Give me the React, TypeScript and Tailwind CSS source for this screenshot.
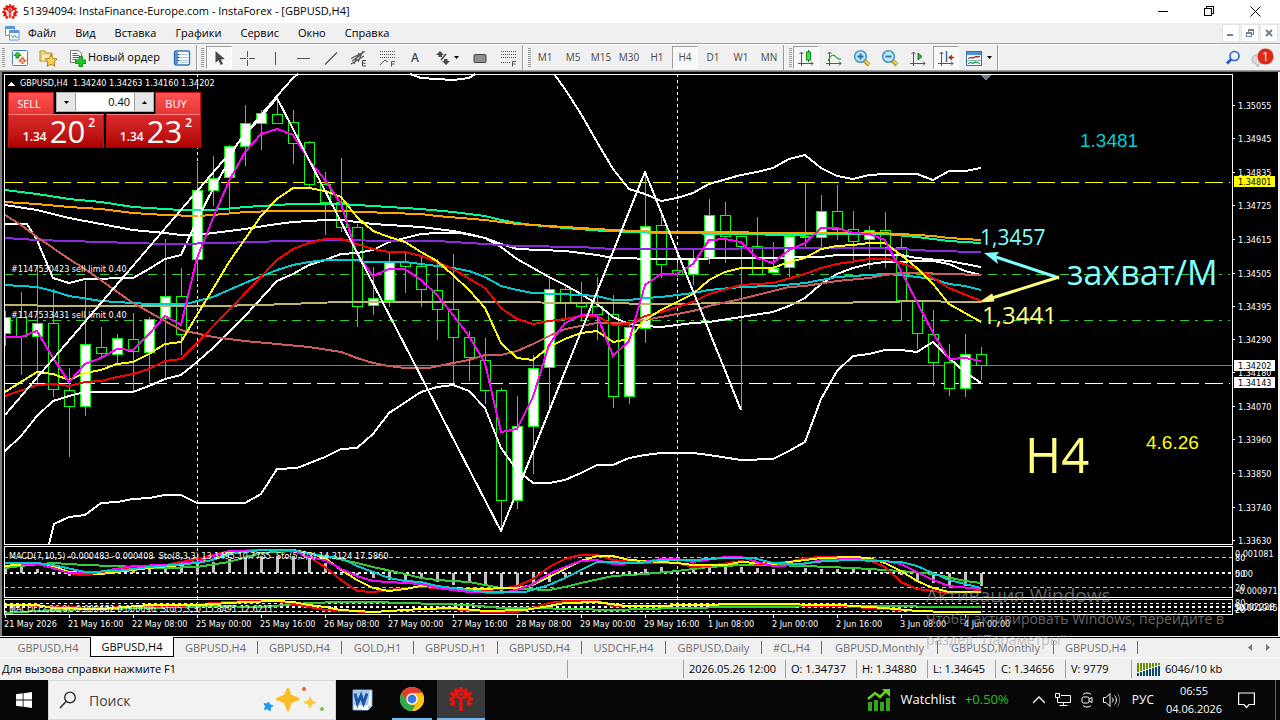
import type { ReactNode } from 'react';

/* ---------- chart data ---------- */

// high, low, body top, body bottom, 1 = filled body
const candles: number[][] = [
  [311, 345, 317, 333, 1], [292, 374, 317, 336, 0], [265, 382, 323, 336, 1], [289, 396, 323, 389, 0],
  [368, 456, 390, 406, 0], [281, 415, 344, 406, 1], [327, 357, 347, 353, 0], [334, 362, 338, 354, 1],
  [313, 390, 339, 351, 0], [317, 381, 319, 352, 1], [239, 377, 296, 318, 1], [268, 354, 296, 334, 0],
  [162, 279, 190, 259, 1], [156, 205, 178, 190, 1], [145, 213, 146, 177, 1], [105, 165, 123, 146, 1],
  [110, 149, 113, 123, 1], [99, 123, 114, 123, 0], [110, 163, 122, 143, 0], [141, 186, 142, 184, 0],
  [172, 234, 184, 202, 0], [158, 231, 202, 227, 0], [224, 326, 227, 306, 0], [267, 314, 298, 305, 1],
  [252, 306, 262, 300, 1], [253, 292, 262, 266, 0], [257, 306, 266, 289, 0], [259, 339, 290, 309, 0],
  [254, 382, 309, 337, 0], [331, 380, 337, 357, 0], [338, 403, 360, 390, 0], [388, 530, 390, 500, 0],
  [396, 508, 426, 500, 1], [355, 473, 368, 426, 1], [277, 410, 289, 367, 1], [286, 318, 289, 302, 0],
  [282, 320, 302, 306, 0], [277, 339, 306, 314, 0], [295, 407, 314, 396, 0], [323, 403, 327, 396, 1],
  [172, 342, 226, 328, 1], [212, 277, 225, 264, 0], [263, 276, 270, 274, 0], [250, 284, 258, 274, 1],
  [199, 263, 215, 257, 1], [202, 262, 215, 236, 0], [236, 409, 236, 246, 0], [217, 274, 246, 274, 0],
  [242, 272, 268, 272, 1], [236, 277, 236, 267, 1], [182, 247, 236, 237, 0], [195, 247, 211, 237, 1],
  [185, 239, 211, 229, 0], [211, 262, 229, 241, 0], [226, 268, 230, 239, 1], [212, 267, 230, 247, 0],
  [238, 320, 247, 300, 0], [301, 348, 301, 333, 0], [310, 385, 334, 362, 0], [344, 395, 362, 388, 0],
  [334, 396, 354, 388, 1], [347, 379, 354, 365, 0],
];

const overlays: { color: string; points: string }[] = [
  { color: '#00fa9a', points: '5,190 37,194 69,199 101,202 133,207 165,209 181,210 213,210 245,207 293,204 341,204 389,207 421,209 453,212 485,216 501,220 517,223 533,225 565,228 605,231 661,233 741,234 789,235 821,234 885,234 917,237 949,241 981,243' },
  { color: '#ffa500', points: '5,202 37,204 69,207 101,209 133,213 165,215 197,216 213,215 245,212 277,211 341,211 389,213 421,214 437,216 485,220 501,222 517,224 565,227 613,230 661,232 741,232 757,233 877,233 901,234 933,236 949,238 981,240' },
  { color: '#ffffff', points: '5,205 37,210 69,218 101,224 133,230 165,233 181,235 197,235 213,233 229,231 245,229 277,224 293,222 325,220 341,220 357,222 373,224 421,227 453,231 469,234 485,238 501,244 517,249 565,251 597,255 613,258 661,259 757,258 821,257 837,255 901,255 917,258 949,261 981,267' },
  { color: '#ffffff', points: '5,451 21,436 37,416 53,401 69,396 85,392 133,392 149,386 165,379 181,375 197,362 213,348 245,316 277,281 293,274 309,265 325,260 341,254 357,253 373,250 389,242 421,234 437,233 461,233 485,238 501,247 517,259 533,268 549,277 565,285 581,294 597,304 613,317 629,324 645,326 661,327 693,323 709,322 741,317 773,312 789,306 805,298 821,284 837,274 853,268 869,264 885,262 933,261 949,264 965,271 981,275' },
  { color: '#ffffff', points: '5,224 27,224 37,240 53,278 69,283 85,279 133,278 149,269 165,259 181,255 197,220 213,189 229,161 237,144 261,115 277,96 293,78 298,74' },
  { color: '#ffffff', points: '410,74 421,78 437,79 453,80 469,78 475,74' },
  { color: '#ffffff', points: '554,74 565,89 581,114 597,142 613,169 629,189 645,194 661,201 677,198 693,193 709,184 741,175 757,172 773,168 789,159 805,155 821,168 837,176 853,179 869,175 885,174 917,174 933,180 949,171 965,171 981,168' },
  { color: '#ffffff', points: '49,544 54,524 69,517 85,515 101,503 117,502 133,499 149,498 165,495 181,495 197,503 213,503 245,503 261,494 277,469 297,468 325,457 341,449 357,448 373,434 389,413 421,392 437,387 453,385 469,391 485,408 501,448 517,470 533,483 549,483 565,480 581,473 597,465 613,465 629,458 645,455 661,453 693,453 709,455 741,460 773,459 789,451 805,442 821,399 837,371 853,356 869,354 885,350 901,350 917,352 933,342 949,358 965,372 981,383' },
  { color: '#8a2be2', points: '5,238 37,240 69,241 101,242 133,243 165,244 229,243 245,242 293,241 341,240 389,241 437,241 453,242 485,244 517,246 581,247 613,249 869,248 901,249 933,251 981,252' },
  { color: '#00ced1', points: '5,285 37,287 53,291 69,296 101,301 149,304 186,304 213,297 245,283 277,270 293,265 309,262 325,260 357,260 365,262 405,262 421,264 437,266 453,268 469,271 485,277 501,286 517,290 533,293 581,295 597,296 613,300 629,300 645,298 661,297 693,293 709,290 741,287 773,286 805,283 837,277 885,274 901,275 933,279 949,284 965,286 981,290' },
  { color: '#bdb76b', points: '5,305 69,306 213,306 261,305 341,302 485,302 597,303 661,304 741,303 837,303 869,302 933,301 949,302 981,302' },
  { color: '#cd5c5c', points: '5,215 21,225 37,237 53,248 69,259 85,269 133,303 149,312 165,321 181,330 213,337 245,341 277,344 309,347 341,352 357,358 373,363 389,366 405,368 429,368 453,363 469,360 485,355 501,355 517,351 533,344 549,336 565,329 597,323 629,323 645,320 661,317 693,311 709,306 741,299 789,287 805,286 837,281 869,278 885,275 901,273 917,273 949,274 981,275' },
  { color: '#ff0000', points: '5,396 37,385 53,384 69,386 85,382 101,381 117,377 133,374 149,369 165,361 181,359 197,343 229,310 277,260 293,249 309,243 325,239 341,239 357,244 373,249 389,252 405,252 421,256 437,262 453,269 485,288 501,308 517,319 533,324 549,321 565,319 581,316 597,316 613,325 629,324 645,316 661,312 693,302 709,294 741,285 773,283 805,274 821,268 837,264 869,259 888,259 901,263 917,269 933,278 949,288 981,301' },
  { color: '#ffff00', points: '5,392 21,382 37,372 53,374 69,380 85,373 101,370 117,364 133,362 149,354 165,344 181,342 197,315 213,289 229,262 245,239 261,216 277,199 293,188 309,188 325,191 341,197 357,217 373,231 389,237 405,242 421,252 437,261 453,275 469,290 485,308 501,343 517,358 533,360 549,347 565,339 581,333 597,331 613,342 629,339 645,320 661,310 677,302 693,294 709,280 725,272 741,268 773,268 789,262 805,258 821,249 837,246 853,245 869,243 885,243 901,255 917,268 933,284 949,304 981,322' },
  { color: '#ff00ff', points: '5,337 21,337 37,331 53,358 69,382 85,364 101,358 117,349 133,350 149,334 165,316 181,325 197,258 213,218 229,181 245,152 261,134 277,129 293,135 309,160 325,180 341,204 357,254 373,276 389,269 405,269 421,280 437,295 453,315 469,336 485,363 501,432 517,429 533,397 549,345 565,323 581,315 597,315 613,356 629,341 645,285 661,274 677,274 693,264 709,240 725,239 741,242 757,258 773,263 789,250 805,243 821,228 837,228 853,233 869,234 885,240 901,271 933,333 949,359 965,358 981,361' },
];

const macdBars: [number, number][] = [
  [5, 566], [21, 566], [37, 569], [53, 575], [69, 576], [85, 575], [101, 575], [117, 571], [133, 570], [149, 568],
  [165, 567], [181, 565], [197, 563], [213, 562], [229, 559], [245, 557], [261, 556], [277, 556], [293, 556],
  [309, 558], [325, 563], [341, 575], [357, 576], [373, 578], [389, 580], [405, 582], [421, 579], [437, 582],
  [453, 585], [469, 583], [485, 586], [501, 594], [517, 587], [533, 585], [549, 582], [565, 577], [581, 575],
  [597, 574], [613, 571], [629, 571], [645, 569], [661, 567], [677, 570], [693, 564], [709, 568], [725, 567],
  [741, 567], [757, 568], [773, 569], [789, 571], [805, 568], [821, 569], [837, 569], [853, 568], [869, 569],
  [885, 572], [901, 575], [917, 581], [933, 583], [949, 586], [965, 586], [981, 586],
];

const oscillators: { color: string; points: string }[] = [
  { color: '#32cd32', points: '5,568 29,565 53,563 85,565 113,566 165,568 197,567 229,562 261,553 293,551 325,556 357,563 373,567 405,574 421,578 437,580 469,582 485,585 501,588 549,590 565,587 581,583 613,576 645,574 677,571 709,567 741,565 773,565 805,566 853,568 901,571 933,574 965,581 981,583' },
  { color: '#ff0000', points: '5,563 37,564 53,566 69,573 80,575 101,574 117,569 165,565 197,559 229,551 261,550 293,551 309,557 325,567 341,580 357,591 373,592 389,590 405,588 421,587 437,588 453,590 485,590 501,589 517,586 533,579 549,567 565,559 580,555 597,555 613,560 645,563 677,563 693,567 709,566 741,561 757,564 773,563 789,562 805,558 821,557 853,557 869,560 885,567 901,582 917,589 949,593 981,591' },
  { color: '#ffff00', points: '5,566 37,563 53,566 69,572 101,574 117,572 149,568 181,565 213,560 229,553 261,550 293,550 309,553 325,558 341,570 357,580 373,588 389,591 405,589 421,586 437,587 469,589 517,588 533,585 549,577 565,569 581,561 597,556 613,556 629,560 661,562 677,563 693,565 725,565 741,562 773,564 789,562 821,558 853,557 869,558 885,563 901,571 917,581 933,588 949,592 981,592' },
  { color: '#ff00ff', points: '5,563 37,564 53,568 69,573 95,573 109,570 133,566 165,565 197,562 213,556 229,551 277,550 293,551 309,557 325,560 341,569 357,576 373,581 405,583 421,584 437,588 469,592 501,593 517,590 533,584 549,574 565,567 581,561 597,560 613,564 637,563 661,559 677,559 693,562 725,557 741,557 757,562 773,566 800,565 821,560 853,559 885,561 901,564 917,572 933,580 949,586 981,589' },
  { color: '#00ced1', points: '5,563 37,563 53,565 85,572 117,571 149,567 197,563 213,560 229,554 245,552 261,550 293,550 309,554 341,558 357,566 373,572 389,578 405,581 421,582 437,586 453,588 485,592 525,592 549,585 565,578 581,570 597,562 640,563 661,560 693,560 725,558 753,558 773,563 800,564 825,561 853,560 901,562 917,566 933,573 949,580 965,584 981,588' },
  { color: '#32cd32', points: '5,613 53,610 149,608 213,606 261,607 309,603 341,602 373,602 405,603 437,604 469,605 501,608 533,608 613,610 677,608 741,607 853,606 981,607' },
  { color: '#ff0000', points: '5,605 21,605 53,607 101,608 149,606 181,606 213,603 229,602 245,601 277,601 293,604 309,607 325,610 341,611 373,612 405,610 421,609 453,609 485,612 517,612 533,608 549,603 565,601 597,601 613,606 660,606 680,605 760,605 840,606 853,607 885,609 917,611 949,612 981,612' },
  { color: '#ffff00', points: '5,605 37,605 53,608 101,609 149,605 197,605 213,604 245,602 277,601 293,602 309,605 325,607 341,610 373,612 405,610 421,609 453,608 485,611 525,610 549,606 565,603 597,602 625,606 660,606 680,605 760,604 840,605 853,606 885,608 917,611 949,612 981,612' },
];

const timeLabels = [
  '21 May 2026', '21 May 16:00', '22 May 08:00', '25 May 00:00', '25 May 16:00', '26 May 08:00', '27 May 00:00', '27 May 16:00',
  '28 May 08:00', '29 May 00:00', '29 May 16:00', '1 Jun 08:00', '2 Jun 00:00', '2 Jun 16:00', '3 Jun 08:00', '4 Jun 00:00',
];

const priceLabels: [string, number][] = [
  ['1.35055', 105], ['1.34945', 138], ['1.34835', 172], ['1.34725', 205], ['1.34615', 239], ['1.34505', 273], ['1.34395', 306],
  ['1.34290', 339], ['1.34180', 372], ['1.34070', 406], ['1.33960', 439], ['1.33850', 473], ['1.33740', 507], ['1.33630', 540],
];

const chartFont = 'font-["DejaVu_Sans_Condensed","DejaVu_Sans",sans-serif] text-[9px]';

/* ---------- chart ---------- */

function Plot() {
  return (
    <svg className="h-[564px] min-w-0 flex-1" role="img" aria-label="GBPUSD,H4">
      <g transform="translate(-2,-72)" shapeRendering="crispEdges">
        <g fill="none" strokeWidth="1">
          <line x1="4" x2="100%" y1="182.5" y2="182.5" stroke="#ff0" strokeDasharray="18 6" strokeDashoffset="-1" />
          <line x1="4" x2="100%" y1="274.5" y2="274.5" stroke="#32cd32" strokeDasharray="9 6 3 6" />
          <line x1="4" x2="100%" y1="320.5" y2="320.5" stroke="#32cd32" strokeDasharray="9 6 3 6" />
          <line x1="4" x2="101%" y1="365.5" y2="365.5" stroke="#708090" />
          <line x1="4" x2="100%" y1="383.5" y2="383.5" stroke="#fff" strokeDasharray="18 6" strokeDashoffset="-1" />
          <path d="M197.5 74V614M677.5 74V614" stroke="#fff" strokeDasharray="3 3" />
          <path d="M4 557.5H1232M4 587.5H1232" stroke="#c0c0c0" strokeDasharray="4 3" />
          <path d="M4 603.5H1232M4 611.5H1232" stroke="#fff" strokeDasharray="3 3" />
          <path d="M4 573H1232M4 607H1232" stroke="#fff" strokeWidth="2" strokeDasharray="3 3" />
        </g>
        {candles.map(([hi, lo, top, bottom, filled], i) => (
          <g key={i}>
            <path d={`M${5.5 + i * 16} ${hi}V${lo + 1}`} stroke="#0f0" />
            <rect x={0.5 + i * 16} y={top + 0.5} width="10" height={bottom - top} fill={filled ? '#fff' : '#000'} stroke="#0f0" />
          </g>
        ))}
        {macdBars.map(([x, y]) => (
          <rect key={x} x={x - 1} y={Math.min(y, 573)} width="3" height={Math.abs(y - 573)} fill="#c0c0c0" />
        ))}
        <g fill="none" strokeWidth="2">
          {overlays.map((o, i) => <polyline key={i} points={o.points} stroke={o.color} />)}
          <polyline points="5,415 277,98 501,531 645,172 741,410" stroke="#fff" />
          {oscillators.map((o, i) => <polyline key={i} points={o.points} stroke={o.color} />)}
        </g>
        <rect x="0" y="72" width="4" height="564" fill="#000" />
        <g stroke="#fff" fill="none">
          <path d="M4.5 74V545M4.5 546V598M4.5 599V615" />
          <line x1="4" x2="101%" y1="74.5" y2="74.5" />
          <line x1="4" x2="101%" y1="544.5" y2="544.5" />
          <line x1="4" x2="101%" y1="546.5" y2="546.5" />
          <line x1="4" x2="101%" y1="597.5" y2="597.5" />
          <line x1="4" x2="101%" y1="599.5" y2="599.5" />
          <line x1="4" x2="101%" y1="614.5" y2="614.5" />
          {timeLabels.map((t, i) => <path key={t} d={`M${5.5 + i * 64} 614V618`} />)}
        </g>
        <path d="M980 75h11l-5 5z" fill="#708090" />
        <path d="M8 86h7l-3.500-4z" fill="#fff" />
        <g fill="#fff" className={chartFont}>
          <text x="20" y="86">{'GBPUSD,H4\u00a0\u00a01.34240 1.34263 1.34160 1.34202'}</text>
          <text x="11" y="272">#1147530423 sell limit 0.40</text>
          <text x="11" y="318">#1147533431 sell limit 0.40</text>
          <text x="9" y="559">{'MACD(7,10,5) -0.000483 -0.000408\u00a0\u00a0Sto(8,3,3) 13.1495 10.7755\u00a0\u00a0Sto(5,3,3) 14.3124 17.5860'}</text>
          <text x="9" y="612">{'MACD(12,26,9) -0.000682 0.000096\u00a0\u00a0Sto(5,3,3) 15.8491 12.6211'}</text>
          {timeLabels.map((t, i) => <text key={t} x={4 + i * 64} y="627">{t}</text>)}
        </g>
        <g shapeRendering="auto">
          <path d="M1059 278L996 257" stroke="#80ffff" strokeWidth="3" />
          <path d="M984 253l15-1-3 4 2 8z" fill="#80ffff" />
          <path d="M1059 277L992 298" stroke="#ffff80" strokeWidth="3" />
          <path d="M980 302l12-8 1 4 1 3z" fill="#ffff80" stroke="#ffff80" />
          <g className="font-['Open_Sans',sans-serif]">
            <text x="980" y="245" fill="#80ffff" className="text-[21px] font-medium">1,3457</text>
            <text x="1067" y="285" fill="#80ffff" className="text-[34px] font-medium">захват/М</text>
            <text x="982" y="324" fill="#ffff80" className="text-[24px] font-medium">1,3441</text>
            <text x="1025" y="473" fill="#ffff80" className="text-[49px] font-medium">H4</text>
          </g>
          <g className="font-['Liberation_Sans',Arial,sans-serif] text-[19px]">
            <text x="1080" y="147" fill="#00ced1">1.3481</text>
            <text x="1146" y="449" fill="#ff0">4.6.26</text>
          </g>
        </g>
      </g>
    </svg>
  );
}

function PriceAxis() {
  return (
    <svg className="h-[564px] w-[46px] shrink-0" role="img" aria-label="Цена">
      <g transform="translate(-1232,-72)" shapeRendering="crispEdges">
        <path d="M1232.500 74V545M1232.500 546V598M1232.500 599V615" stroke="#fff" />
        <g className={chartFont} fill="#fff">
          {priceLabels.map(([t, y]) => (
            <g key={t}>
              <path d={`M1232 ${y + 0.5}H1235`} stroke="#fff" />
              <text x="1238" y={y + 4}>{t}</text>
            </g>
          ))}
          <rect x="1234" y="176" width="41" height="11" fill="#ff0" />
          <rect x="1234" y="360" width="41" height="11" />
          <rect x="1234" y="377" width="41" height="11" />
          <g fill="#000">
            <text x="1238" y="185">1.34801</text>
            <text x="1238" y="369">1.34202</text>
            <text x="1238" y="386">1.34143</text>
          </g>
          <text x="1235" y="557">0.001081</text>
          <text x="1235" y="561">80</text>
          <text x="1235" y="577">50</text>
          <text x="1235" y="577">0.00</text>
          <text x="1235" y="591">20</text>
          <text x="1236" y="594">-0.000971</text>
          <text x="1235" y="606">80</text>
          <text x="1236" y="610">0.002228</text>
          <text x="1234" y="611">50</text>
          <text x="1236" y="611">-0.001945</text>
          <text x="1235" y="613">20</text>
        </g>
      </g>
    </svg>
  );
}

function TradeSide({ title, pips }: { title: string; pips: string }) {
  const buy = title === 'BUY';
  return (
    <div className={buy ? 'flex w-[95px] flex-col items-end' : 'flex w-24 flex-col items-start'}>
      <button className="flex h-[22px] w-[46px] items-center justify-center border border-b-0 border-[#c01010] bg-linear-to-b from-[#ff5252] to-[#e63535] pr-1 font-['Open_Sans',sans-serif] text-[11px] leading-none text-white">
        {title}
      </button>
      <div className="flex h-[34px] w-full items-end justify-end gap-[3px] border border-t-[#ff8080] border-x-[#c01010] border-b-[#900000] bg-linear-to-b from-[#dc2b2b] to-[#ae0000] pr-2 font-['Open_Sans',sans-serif] text-white">
        <span className="pb-1 text-[12px] leading-3 font-semibold">1.34</span>
        <span className="pb-1 text-[31px] leading-6">{pips}</span>
        <span className="self-start pt-1 text-[12px] leading-2 font-semibold">2</span>
      </div>
    </div>
  );
}

function TradePanel() {
  return (
    <div className="absolute top-5 left-1.5 flex gap-0.5">
      <TradeSide title="SELL" pips="20" />
      <TradeSide title="BUY" pips="23" />
      <div className="absolute top-0 left-12 flex h-5 w-[98px] items-stretch border border-[#b0b0b0] bg-white">
        <button aria-label="Меньше" className="flex w-[19px] items-center justify-center border-r border-[#a0a0a0] bg-[#e6e6e6]">
          <svg className="h-[3px] w-[5px]"><path d="M0 0h5L2.500 3z" /></svg>
        </button>
        <input aria-label="Объём" defaultValue="0.40" className="min-w-0 flex-1 bg-white pr-1 text-right font-['Open_Sans',sans-serif] text-[11px] text-black outline-none" />
        <button aria-label="Больше" className="flex w-[19px] items-center justify-center border-l border-[#a0a0a0] bg-[#e6e6e6]">
          <svg className="h-[3px] w-[5px]"><path d="M0 3h5L2.500 0z" /></svg>
        </button>
      </div>
    </div>
  );
}

/* ---------- icons ---------- */

function GearLogo({ className }: { className: string }) {
  const teeth = [0, 30, 60, 90, 120, 150, 180, 210, 240, 270, 300, 330];
  return (
    <svg className={className} viewBox="0 0 24 24" fill="#e8140c">
      {teeth.filter((a) => a !== 180).map((a) => <rect key={a} x="10.400" y="0.500" width="3.200" height="4" transform={`rotate(${a} 12 12)`} />)}
      <path d="M12 2.500a9.500 9.500 0 0 0-5 17.600V13L3.800 10 5.500 8.500 10 12v9.500 0h4V12l4.500-3.500L20.200 10 17 13v7.100A9.500 9.500 0 0 0 12 2.500z" fillRule="evenodd" />
      <path d="M6.300 9.300L10.500 12.500V24M17.700 9.300L13.500 12.500V24" stroke="#fff" strokeOpacity="0.85" strokeWidth="1" fill="none" />
      <circle cx="12" cy="8" r="2.600" fill="#fff" fillOpacity="0.9" />
      <circle cx="12" cy="8" r="1.700" />
    </svg>
  );
}

function Grip() {
  return (
    <svg className="h-5 w-[3px] shrink-0" shapeRendering="crispEdges">
      <path d="M1.500 0V20" stroke="#9a9a9a" strokeWidth="3" strokeDasharray="1 1" />
    </svg>
  );
}

function Divider() {
  return <div className="h-[25px] w-0.5 shrink-0 border-r border-l border-r-white border-l-[#9a9a9a]" />;
}

function Tool({ label, children, on, wide }: { label: string; children: ReactNode; on?: boolean; wide?: boolean }) {
  return (
    <button
      aria-label={label}
      aria-pressed={on}
      className={`flex h-[23px] shrink-0 items-center justify-center gap-1 text-[10px] text-[#4a4a4a] ${wide ? 'w-[37px]' : on ? 'mx-px w-[26px] border border-t-[#a0a0a0] border-r-white border-b-white border-l-[#a0a0a0] bg-[#f8f8f8]' : 'w-7'}`}
    >
      {children}
    </button>
  );
}

const Caret = () => <svg className="h-[3px] w-[5px]"><path d="M0 0h5L2.500 3z" /></svg>;

const ic = 'h-[18px] w-[18px] shrink-0';

function Axes() {
  return <path d="M4.500 3V17M1 14.500H16M2.500 5l2-2 2 2M14 12.500l2 2-2 2" stroke="#555" fill="none" />;
}

function FiboDots() {
  return <path d="M2 2.500H17M2 5.500H17M2 8.500H17" stroke="#555" strokeDasharray="1 1" fill="none" shapeRendering="crispEdges" />;
}

function Lens({ minus }: { minus?: boolean }) {
  return (
    <svg className={ic} viewBox="0 0 18 18">
      <path d="M11 11l5 5" stroke="#b8901c" strokeWidth="4" />
      <path d="M11.500 11l4.500 4.500" stroke="#f2d45c" strokeWidth="2" />
      <circle cx="7.500" cy="7.500" r="5.800" fill="#bfe6f7" stroke="#4a96c4" strokeWidth="1.600" />
      <path d={minus ? 'M4.500 7.500h6' : 'M4.500 7.500h6M7.500 4.500v6'} stroke="#2a6fa8" strokeWidth="1.800" />
    </svg>
  );
}

function Toolbar() {
  return (
    <div className="flex h-[27px] items-center border-t border-b border-t-white border-b-[#a0a0a0] bg-[#f0f0f0] pl-0.5">
      <Grip />
      <div className="flex items-center pl-px">
        <Tool label="Новый график">
          <svg className={ic} viewBox="0 0 18 18">
            <rect x="1.500" y="1.500" width="15" height="15" rx="1" fill="#fff" stroke="#3f86c0" />
            <path d="M4 4.500h10M4 7.500h10M4 10.500h10M4 13.500h10" stroke="#c9dbe8" strokeDasharray="1 1" />
            <path d="M6.500 3l3.500 3.500H8v2.500H5V6.500H3z" fill="#3cc63c" stroke="#0c7a12" strokeWidth="0.800" />
            <path d="M11.500 15l3.500-3.500H13V9h-3v2.500H8z" fill="#ffb070" stroke="#d03a10" strokeWidth="0.800" />
          </svg>
        </Tool>
        <Tool label="Профили">
          <svg className="h-[18px] w-5" viewBox="0 0 20 18">
            <path d="M2 2h5l1 2h6v8H2z" fill="#f7dc82" stroke="#b89030" />
            <path d="M3.500 5h11l-1 7H3z" fill="#fdf0b8" stroke="#c9a548" strokeWidth="0.700" />
            <path d="M13 5.500l1.900 4 4.300.5-3.200 3 .9 4.300-3.900-2.200-3.900 2.200.9-4.300-3.200-3 4.300-.5z" fill="#ffd648" stroke="#a8781c" />
          </svg>
        </Tool>
        <button className="flex h-[23px] w-[106px] items-center gap-0.5 pl-1.5 text-[11px] text-black">
          <svg className={ic} viewBox="0 0 18 18">
            <path d="M2.500 1.500h8l3 3v9h-11z" fill="#fff" stroke="#777" />
            <path d="M4.500 4.500h5M4.500 6.500h7M4.500 8.500h7M4.500 10.500h4" stroke="#666" />
            <path d="M11 7.500h3.500V11H18v3.500h-3.500V18H11v-3.500H7.500V11H11z" fill="#23c32a" stroke="#0d8a14" strokeWidth="0.900" />
          </svg>
          <span className="whitespace-nowrap">Новый ордер</span>
        </button>
        <Tool label="Обзор рынка">
          <svg className={ic} viewBox="0 0 18 18">
            <rect x="1.500" y="2" width="15" height="14" rx="1.500" fill="#fff" stroke="#2f74b0" strokeWidth="1.400" />
            <path d="M2 3h3v12.500H2z" fill="#4a96d4" />
            <path d="M7 5.500h8M7 8.500h8M7 11.500h8M7 13.500h8" stroke="#8ab0d0" strokeWidth="0.700" />
            <path d="M5 5.500h1.500M5 8.500h1.500M5 11.500h1.500" stroke="#123" />
          </svg>
        </Tool>
      </div>
      <Divider />
      <div className="flex items-center gap-px pl-[3px]">
        <Grip />
        <div className="flex items-center">
          <Tool label="Курсор" on>
            <svg className={ic} viewBox="0 0 18 18"><path d="M5.500 2v12l3-2.700 2.200 4.700 2.300-1-2.200-4.600 4-.4z" fill="#4a4a4a" /></svg>
          </Tool>
          <Tool label="Перекрестие">
            <svg className={ic} viewBox="0 0 18 18"><path d="M9.500 2v6M9.500 11v6M2 9.500h6M11 9.500h6M9 9.500h1" stroke="#555" fill="none" /></svg>
          </Tool>
          <Tool label="Вертикальная линия"><svg className={ic} viewBox="0 0 18 18"><path d="M9.500 3v13" stroke="#555" /></svg></Tool>
          <Tool label="Горизонтальная линия"><svg className={ic} viewBox="0 0 18 18"><path d="M3 9.500h13" stroke="#555" /></svg></Tool>
          <Tool label="Трендовая линия"><svg className={ic} viewBox="0 0 18 18"><path d="M3 15.500L15 3.500" stroke="#555" strokeWidth="1.200" /></svg></Tool>
          <Tool label="Канал">
            <svg className={ic} viewBox="0 0 18 18">
              <path d="M1 9.500L15 2.500M1 15L14 7M4 15L9 4M8 13l5-11M2 12l10-7" stroke="#555" fill="none" strokeWidth="1.200" />
              <path d="M16 11.500h-3.500v5.500H16M12.500 14.200H15.500" stroke="#444" fill="none" />
            </svg>
          </Tool>
          <Tool label="Фибоначчи">
            <svg className={ic} viewBox="0 0 18 18">
              <FiboDots />
              <path d="M2 16l5-5 3 2M13.500 17.500V12.500H17M13.500 15h3" stroke="#555" fill="none" />
            </svg>
          </Tool>
          <Tool label="Текст"><span className="text-[12px] font-semibold">A</span></Tool>
          <Tool label="Стрелки" wide>
            <svg className="h-[14px] w-[14px]" viewBox="0 0 14 14">
              <path d="M4 0l4 4H6v2H2.500V4H0zM10 14l-4-4h2V8h3.500v2H14z" fill="#4a4a4a" />
              <path d="M5 9l5-6" stroke="#4a4a4a" strokeWidth="1.500" />
            </svg>
            <Caret />
          </Tool>
          <Tool label="Прямоугольник"><svg className={ic} viewBox="0 0 18 18"><rect x="3" y="5.500" width="12" height="8" rx="1" fill="#8e8e8e" stroke="#444" /></svg></Tool>
          <Tool label="Уровни">
            <svg className={ic} viewBox="0 0 18 18"><FiboDots /><path d="M2 13.500H11" stroke="#555" strokeDasharray="1 1" /><path d="M13.500 17.500V12.500H17M13.500 15h3" stroke="#555" fill="none" /></svg>
          </Tool>
        </div>
      </div>
      <Divider />
      <div className="flex items-center pl-1">
        <Grip />
        {['M1', 'M5', 'M15', 'M30', 'H1', 'H4', 'D1', 'W1', 'MN'].map((t) => <Tool key={t} label={t} on={t === 'H4'}>{t}</Tool>)}
      </div>
      <Divider />
      <div className="flex items-center pl-1">
        <Grip />
        <Tool label="Свечи" on>
          <svg className={ic} viewBox="0 0 18 18"><Axes /><path d="M11.500 1v12" stroke="#0a6b14" /><rect x="9.500" y="3" width="4" height="8" fill="#45e04c" stroke="#0a8a18" /></svg>
        </Tool>
        <Tool label="Линия"><svg className={ic} viewBox="0 0 18 18"><Axes /><path d="M3 12C6 5 9 5 11 8s3 2 5 2" stroke="#3a9a3e" fill="none" strokeWidth="1.300" /></svg></Tool>
        <Tool label="Увеличить"><Lens /></Tool>
        <Tool label="Уменьшить"><Lens minus /></Tool>
        <Tool label="Автопрокрутка"><svg className={ic} viewBox="0 0 18 18"><Axes /><path d="M9 4l4 3.500-4 3.500z" fill="#35b53c" stroke="#0f7a1a" /></svg></Tool>
        <Tool label="Сдвиг графика" on><svg className={ic} viewBox="0 0 18 18"><Axes /><path d="M9.500 2v11" stroke="#3a70a0" strokeWidth="1.500" /><path d="M17 8.500h-3" stroke="#a83010" strokeWidth="1.500" /><path d="M11 8.500l4-3v6z" fill="#c03a14" /></svg></Tool>
        <Tool label="Шаблоны" wide>
          <svg className={ic} viewBox="0 0 18 18">
            <rect x="1.500" y="2.500" width="15" height="14" fill="#fff" stroke="#2f74b0" />
            <rect x="2" y="3" width="14" height="3" fill="#4a96d4" />
            <path d="M2 11.500h14" stroke="#7ab0d8" />
            <path d="M3 9.500l3-1 2 .5 3-1.500 2 .5 2-1" stroke="#a02c10" fill="none" strokeWidth="1.300" />
            <path d="M3 14.500l3-1 2 1 2-1.500 2 .5 3 1" stroke="#2a9a30" fill="none" strokeWidth="1.300" />
          </svg>
          <Caret />
        </Tool>
      </div>
      <Divider />
      <div className="ml-auto flex items-center gap-2.5 pr-1.5">
        <button aria-label="Поиск">
          <svg className="h-4 w-4" viewBox="0 0 16 16"><circle cx="9.500" cy="6" r="4.500" fill="#eef5ff" stroke="#2a5fd0" strokeWidth="1.600" /><path d="M6 9.500L2 13.500" stroke="#2a5fd0" strokeWidth="3" /></svg>
        </button>
        <button aria-label="Сообщения" className="relative h-5 w-[23px]">
          <svg className="h-5 w-[23px]" viewBox="0 0 23 20">
            <path d="M1 12a6 5 0 0 1 12-1 6 4.500 0 0 1-5 5l-1 3-2-3A6 4.500 0 0 1 1 12z" fill="#dcdcdc" stroke="#b0b0b0" />
            <circle cx="14.500" cy="8.500" r="8" fill="#dd2a18" />
          </svg>
          <span className="absolute top-0 right-0 w-[17px] text-center text-[12px] leading-[17px] text-white">1</span>
        </button>
      </div>
    </div>
  );
}

/* ---------- window chrome ---------- */

function TitleBar() {
  return (
    <header className="flex h-[23px] items-center bg-white pr-0.5 pl-0.5 text-black">
      <GearLogo className="h-4 w-4" />
      <h1 className="pl-[5px] text-[11px] font-normal">51394094: InstaFinance-Europe.com - InstaForex - [GBPUSD,H4]</h1>
      <div className="ml-auto flex">
        <button aria-label="Свернуть" className="flex w-[46px] justify-center"><svg className="h-[11px] w-[11px]"><path d="M0 5.500h10" stroke="#000" shapeRendering="crispEdges" /></svg></button>
        <button aria-label="Восстановить" className="flex w-[46px] justify-center"><svg className="h-[11px] w-[11px]" shapeRendering="crispEdges"><path d="M.5 2.500h7v7h-7zM2.500 2.500v-2h7v7h-2" fill="none" stroke="#000" /></svg></button>
        <button aria-label="Закрыть" className="flex w-[46px] justify-center"><svg className="h-[11px] w-[11px]"><path d="M.5.5l10 10M10.500.5l-10 10" stroke="#000" /></svg></button>
      </div>
    </header>
  );
}

function MenuBar() {
  const mdi = 'flex h-[18px] w-[18px] items-center justify-center border border-[#e3e3e3] bg-white';
  return (
    <nav className="flex h-[21px] items-center border-b border-[#a0a0a0] bg-[#f0f0f0] pr-0.5 pl-[5px] text-[11px] text-black">
      <svg className="h-[15px] w-[15px]" viewBox="0 0 15 15" fill="none" stroke="#5b95d6">
        <path d="M.5.5h9v9h-9z" fill="#fff" /><path d="M1 2h8" strokeWidth="2" />
        <path d="M4.500 4.500h9.500v9.500H4.500z" fill="#fff" /><path d="M5 6h9" strokeWidth="2" /><path d="M6 9l2 3 1.500-3 2 3 1-2" />
      </svg>
      <div className="flex gap-[19px] pl-2">
        {['Файл', 'Вид', 'Вставка', 'Графики', 'Сервис', 'Окно', 'Справка'].map((m) => <button key={m}>{m}</button>)}
      </div>
      <div className="ml-auto flex gap-px">
        <button aria-label="Свернуть окно" className={mdi}><svg className="h-2 w-2"><path d="M0 6h6" stroke="#708090" strokeWidth="2" /></svg></button>
        <button aria-label="Восстановить окно" className={mdi}><svg className="h-2 w-2" shapeRendering="crispEdges"><path d="M.5 4v3.500h5V4zM2.500 3V1h5v4H6" fill="none" stroke="#708090" /><path d="M0 4h6M2 1h6" stroke="#708090" strokeWidth="2" /></svg></button>
        <button aria-label="Закрыть окно" className={mdi}><svg className="h-2 w-2"><path d="M1 1l6 6M7 1L1 7" stroke="#708090" strokeWidth="2" /></svg></button>
      </div>
    </nav>
  );
}

const tabs: [string, string][] = [
  ['GBPUSD,H4', 'w-[84px]'], ['GBPUSD,H4', 'w-[84px]'], ['GBPUSD,H4', 'w-[84px]'], ['GBPUSD,H4', 'w-[84px]'], ['GOLD,H1', 'w-[72px]'],
  ['GBPUSD,H1', 'w-[84px]'], ['GBPUSD,H4', 'w-[84px]'], ['USDCHF,H4', 'w-[84px]'], ['GBPUSD,Daily', 'w-[96px]'], ['#CL,H4', 'w-[60px]'],
  ['GBPUSD,Monthly', 'w-[116px]'], ['GBPUSD,Monthly', 'w-[116px]'], ['GBPUSD,H4', 'w-[84px]'],
];

function ChartTabs() {
  return (
    <div className="flex h-[21px] border-t border-b border-t-black border-b-white bg-[#f0f0f0] pl-1.5 text-[11px] text-[#6d6d6d]">
      {tabs.map(([t, w], i) => (
        <button key={i} className={`${w} shrink-0 ${i === 1 ? '-mt-px h-5 border border-t-0 border-black bg-white text-black' : 'flex items-center'}`}>
          <span className={`block flex-1 text-center leading-[13px] ${i > 1 ? 'border-r border-[#6d6d6d]' : ''}`}>{t}</span>
        </button>
      ))}
      <div className="ml-auto flex items-center gap-3.5 pr-2.5">
        <button aria-label="Назад"><svg className="h-[7px] w-1"><path d="M4 0v7L0 3.500z" fill="#777" /></svg></button>
        <button aria-label="Вперёд"><svg className="h-[7px] w-1"><path d="M0 0v7l4-3.500z" fill="#777" /></svg></button>
      </div>
    </div>
  );
}

function StatusBar() {
  const cells: [string, string][] = [
    ['', 'w-[116px]'], ['2026.05.26 12:00', 'w-[102px]'], ['O: 1.34737', 'w-[71px]'], ['H: 1.34880', 'w-[71px]'],
    ['L: 1.34645', 'w-[68px]'], ['C: 1.34656', 'w-[70px]'], ['V: 9779', 'w-[66px]'],
  ];
  return (
    <footer className="flex h-[22px] items-center bg-[#f0f0f0] text-[11px] text-black">
      <span className="flex-1 pl-0.5">Для вызова справки нажмите F1</span>
      {cells.map(([t, w], i) => (
        <span key={i} className={`${w} h-[18px] shrink-0 border-l border-[#a0a0a0] pl-[5px] leading-[18px] whitespace-nowrap`}>{t}</span>
      ))}
      <span className="flex h-[18px] w-[149px] shrink-0 items-center gap-1 border-l border-[#a0a0a0] pl-[5px]">
        <svg className="h-[13px] w-6" shapeRendering="crispEdges">
          {[0, 1, 2, 3, 4, 5, 6, 7].map((i) => (
            <g key={i}>
              <path d={`M${1 + i * 3} 0V${9 - i}`} stroke="#6b8e00" strokeWidth="2" />
              <path d={`M${1 + i * 3} ${10 - i}V13`} stroke="#0b4a6e" strokeWidth="2" />
            </g>
          ))}
        </svg>
        6046/10 kb
      </span>
    </footer>
  );
}

function Taskbar() {
  return (
    <div className="flex h-10 items-stretch bg-[#070707] text-white">
      <button aria-label="Пуск" className="flex w-12 items-center justify-center">
        <svg className="h-4 w-4" viewBox="0 0 16 16" fill="#fff"><path d="M0 2.300L6.700 1.300V7.600H0zM7.500 1.200L16 0v7.600H7.500zM0 8.400h6.700v6.300L0 13.700zM7.500 8.400H16V16l-8.500-1.200z" /></svg>
      </button>
      <label className="flex w-72 items-center gap-3 border border-[#d8d8d8] bg-[#f2f2f2] px-2.5">
        <svg className="h-[18px] w-[18px]" viewBox="0 0 18 18" fill="none" stroke="#222" strokeWidth="1.300"><circle cx="11" cy="6.500" r="5.300" /><path d="M7 10.500L1 17" /></svg>
        <input aria-label="Поиск" placeholder="Поиск" className="min-w-0 flex-1 bg-transparent text-[14px] text-black outline-none placeholder:text-[#404040]" />
        <svg className="h-8 w-16" viewBox="0 0 64 32">
          <path d="M25.500 5.500c.8-2.500 2.200-2.500 3 0l2 5.500 6.500 2.500c2.500 1 2.500 2 0 3L30.500 19l-2 6.500c-.8 2.500-2.200 2.500-3 0L23 19l-6.500-2.500c-2.500-1-2.500-2 0-3L23 11z" fill="#fbbd23" />
          <path d="M49 13l1.700 3.800 4.300 1.700-4.300 1.700L49 24l-1.700-3.800-4.300-1.700 4.300-1.700z" fill="#ffc93a" stroke="#ffc93a" strokeLinejoin="round" />
          <path d="M7.500 18l1.300 2.800 3.200 1-2.600 1.700-.2 3.300-2.600-2-3.200.6 1.200-3-1.600-2.700 3.200.2z" fill="#1a9cf0" stroke="#1a9cf0" strokeLinejoin="round" />
          <circle cx="43" cy="5" r="2" fill="#f0602c" /><circle cx="61" cy="25" r="2" fill="#7cc445" />
        </svg>
      </label>
      <div className="flex pl-2">
        <button aria-label="Word" className="flex w-10 items-center justify-center pr-1">
          <svg className="h-[22px] w-[23px]" viewBox="0 0 23 22">
            <path d="M2 1h19v16l-4 4H2z" fill="#f4f9ff" stroke="#7fa8d8" />
            <path d="M2 1h17l-2 15H2z" fill="#a9c9ee" />
            <path d="M4 4.500l2.500 10L10 6.500l2.500 8L16 4.500" stroke="#1f55a5" strokeWidth="3" fill="none" />
            <path d="M11 21v-3h7v3z" fill="#fff" />
            <path d="M17 21v-4h4z" fill="#b8cfe8" />
          </svg>
        </button>
        <button aria-label="Chrome" className="ml-2 flex w-10 items-center justify-center border-b-2 border-[#76b9ed]">
          <svg className="h-6 w-6" viewBox="0 0 24 24">
            <circle cx="12" cy="12" r="12" fill="#fbc116" />
            <path d="M1.600 6A12 12 0 0 1 22.400 6H12A6 6 0 0 0 6.800 9L6.800 15z" fill="#e33b2e" />
            <path d="M1.600 6L6.800 15A6 6 0 0 0 12 18h5.200L12 24A12 12 0 0 1 1.600 6z" fill="#2da94f" />
            <path d="M22.400 6A12 12 0 0 1 12 24l5.200-9A6 6 0 0 0 12 6z" fill="#fbc116" />
            <circle cx="12" cy="12" r="5.600" fill="#fff" /><circle cx="12" cy="12" r="4.400" fill="#3b78e7" />
          </svg>
        </button>
        <button aria-label="InstaForex" className="ml-[5px] flex w-12 items-center justify-center border-b-2 border-[#76b9ed] bg-[#3a3a3a]">
          <svg className="h-6 w-6" viewBox="0 0 24 24" fill="#e8140c">
            {[0, 30, 60, 90, 120, 240, 270, 300, 330].map((a) => <rect key={a} x="10.300" y="0" width="3.400" height="4" transform={`rotate(${a} 12 12)`} />)}
            <path d="M12 2.500a9.500 9.500 0 0 0-5.500 17.300V14L2.600 11.500 12 12V4zM12 2.500a9.500 9.500 0 0 1 5.500 17.300V14l3.900-2.500L12 12V4z" />
            <path d="M10.300 11h3.400v13h-3.400z" />
            <path d="M5 9.500l4.500 3.500v11M19 9.500l-4.500 3.500v11M6.500 14v7M17.500 14v7" stroke="#3a3a3a" strokeWidth="1" fill="none" />
            <circle cx="12" cy="7.500" r="2.500" stroke="#3a3a3a" />
          </svg>
        </button>
      </div>
      <div className="ml-auto flex items-center">
        <button className="flex items-center gap-[9px] text-[13px]">
          <svg className="h-6 w-6" viewBox="0 0 24 24" fill="#38a322">
            <path d="M1 14h4v9H1zM7 12h4v11H7zM13 14h4v9h-4zM19 10h4v13h-4z" />
            <path d="M1 11l7-6 5 4 6-6" stroke="#67d31e" strokeWidth="2.500" fill="none" /><path d="M15 1h8v8z" fill="#67d31e" />
          </svg>
          <span>Watchlist</span>
          <span className="text-[#1ec81e]">+0.50%</span>
        </button>
        <div className="flex items-center gap-2 pl-6">
          <svg className="h-3 w-3" fill="none" stroke="#fff" strokeWidth="1.300"><path d="M0 9l6-6 6 6" /></svg>
          <svg className="ml-0.5 h-4 w-4" viewBox="0 0 16 16" fill="none" stroke="#fff"><path d="M.5 1.500h4v4h-4zM6 3.500h9.500v7H2.500v-5M8.500 11v2.500M4.500 13.500h8" /></svg>
          <svg className="h-4 w-4" viewBox="0 0 16 16" fill="none" stroke="#fff"><path d="M4 2.500C6 .5 10 .5 12 2.500M4 13.500c2 2 6 2 8 0" /><rect x="3" y="5" width="7" height="6" rx="1.500" /><path d="M10 7l3-1.500v5L10 9" /></svg>
          <svg className="h-4 w-[17px]" viewBox="0 0 17 16" fill="none" stroke="#fff"><path d="M.5 5.500H3l4-4v13l-4-4H.5zM9 5.500c1.500 1.500 1.500 3.500 0 5M11.500 3.500c2.500 2.500 2.500 6.500 0 9" /><path d="M14 1.500c3.500 3.500 3.500 9.500 0 13" stroke="#777" /></svg>
          <button className="pl-1 text-[12px]">РУС</button>
        </div>
        <time className="w-20 text-center text-[11px] leading-[18px]">06:55<br />04.06.2026</time>
        <button aria-label="Уведомления" className="ml-1 pr-3">
          <svg className="h-[17px] w-[17px]" viewBox="0 0 17 17" fill="none" stroke="#fff" strokeWidth="1.200"><path d="M.6 1h15.800v11.500H11L8.500 15.500 6 12.500H.6z" /></svg>
        </button>
        <div className="ml-2 h-10 w-[5px] border-l border-[#666]" />
      </div>
    </div>
  );
}

export default function App() {
  return (
    <div className="relative flex min-h-screen flex-col overflow-hidden bg-[#f0f0f0] font-['Open_Sans','Noto_Sans',sans-serif]">
      <TitleBar />
      <MenuBar />
      <Toolbar />
      <main className="border-t border-[#707070]">
        <div className="relative flex border-r-2 border-l-2 border-r-[#f0f0f0] border-l-[#808080] bg-black">
          <Plot />
          <PriceAxis />
          <TradePanel />
        </div>
      </main>
      <div className="h-px bg-[#f0f0f0]" />
      <ChartTabs />
      <StatusBar />
      <Taskbar />
      <div className="pointer-events-none absolute right-[50px] bottom-[70px] w-[304px] text-[#a0a0a0]/65">
        <p className="text-[19px] leading-[26px]">Активация Windows</p>
        <p className="text-[14px] leading-[21px]">Чтобы активировать Windows, перейдите в раздел "Параметры"</p>
      </div>
    </div>
  );
}
